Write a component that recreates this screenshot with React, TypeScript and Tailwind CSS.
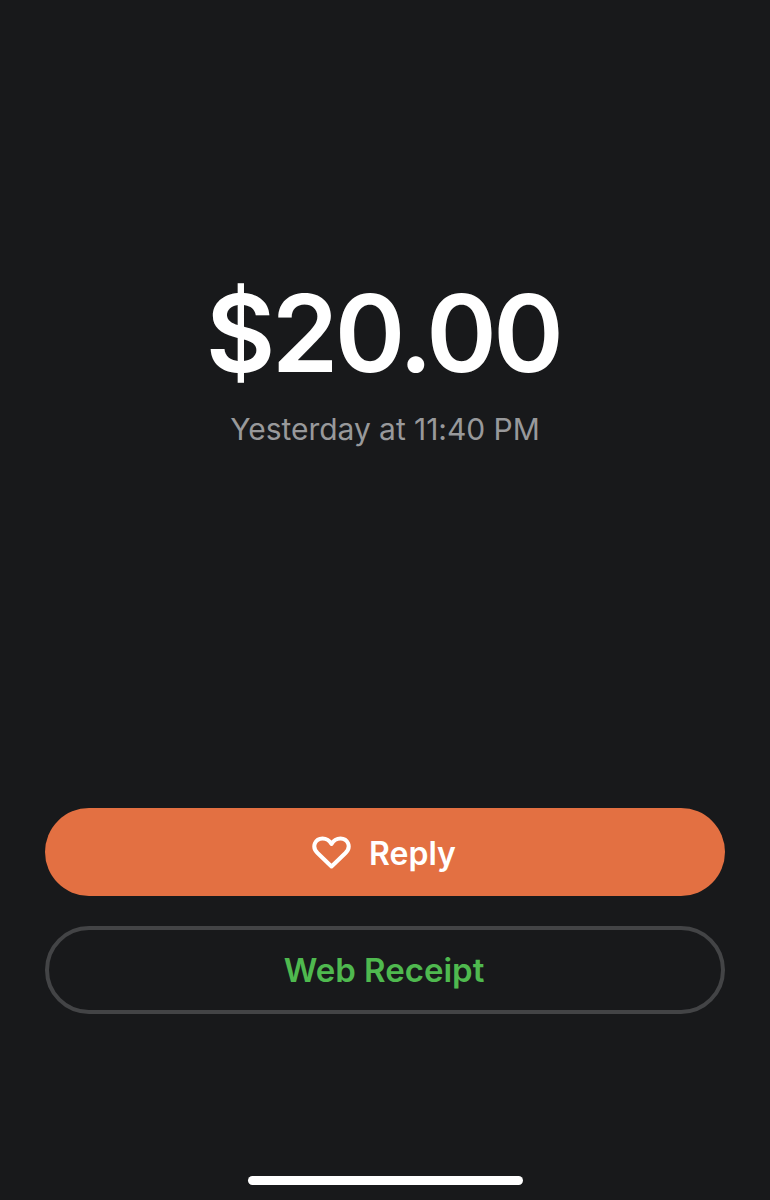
export default function App() {
  return (
    <div className="flex h-[1200px] w-[770px] flex-col items-center overflow-hidden bg-[#18191b] font-['Inter',sans-serif]">
      <div className="mt-[276px] pr-[4px] text-[107px] font-semibold leading-[114px] tracking-[-3.6px] text-white">$20.00</div>
      <div className="mt-[20px] text-[30px] leading-[38px] tracking-[-0.05px] text-[#98999b]">Yesterday at 11:40 PM</div>
      <button className="mt-[360px] flex h-[88px] w-[680px] items-center justify-center gap-[18px] rounded-full bg-[#e37042] pr-[2px] pt-[3px] text-[32px] font-semibold text-white">
        <svg className="-mt-[3px]" width="39" height="33" viewBox="0 0 39 33" fill="none" stroke="white" strokeWidth="4" strokeLinejoin="round">
          <path d="M19.5 30.5 L5.5 17 C-1 10.5 3.5 2.5 10.5 2.5 C14.5 2.5 17.5 4.5 19.5 8 C21.5 4.5 24.5 2.5 28.5 2.5 C35.5 2.5 40 10.5 33.5 17 Z" />
        </svg>
        Reply
      </button>
      <button className="mt-[30px] flex h-[88px] w-[680px] items-center justify-center rounded-full border-4 border-[#434446] pr-[2px] pt-[1px] text-[33px] font-semibold text-[#4fb94f]">Web Receipt</button>
      <div className="mt-[162px] h-[9px] w-[275px] rounded-full bg-white" />
    </div>
  );
}
